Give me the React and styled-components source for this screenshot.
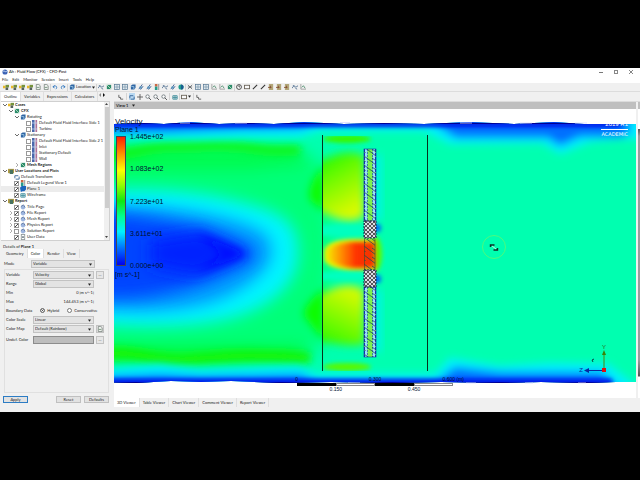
import React, {useState} from 'react';
import styled, {createGlobalStyle, css} from 'styled-components'


const GlobalStyle = createGlobalStyle`
  * {
    box-sizing: border-box;
  }

  body {
    margin: 0;
    background: #000;
  }

  button, input, select {
    margin: 0;
    padding: 0;
    font: inherit;
    color: inherit;
  }
`

const Page = styled.div`
  height: 100vh;
  padding: 68px 0;
  background: #000;
  font: 4px/6px Lato, "Open Sans", sans-serif;
  color: #222;
`

const Window = styled.div`
  display: flex;
  flex-direction: column;
  height: 100%;
  background: #f0f0f0;
  overflow: hidden;
`

const TitleBar = styled.header`
  display: flex;
  align-items: center;
  gap: 1px;
  height: 8px;
  padding: 0 6px 0 2px;
  background: #fff;
  color: #000;
`

const WindowButtons = styled.div`
  display: flex;
  gap: 10px;
  margin-left: auto;
`

const WindowButton = styled.button`
  display: flex;
  width: 5px;
  height: 5px;
  border: 0;
  background: none;
`

const MenuBar = styled.nav`
  display: flex;
  gap: 4px;
  height: 7px;
  padding-left: 2px;
  background: #fff;
`

const MenuItem = styled.button`
  border: 0;
  background: none;
`

const Toolbar = styled.div`
  display: flex;
  align-items: center;
  gap: 2px;
  height: ${({$small}) => $small ? '10px' : '9px'};
  padding-left: ${({$small}) => $small ? '4px' : '3px'};
  border-bottom: 1px solid #dcdcdc;
`

const ToolButton = styled.button`
  display: flex;
  align-items: center;
  gap: 1px;
  height: 7px;
  border: 0;
  background: ${({$active}) => $active ? '#b9d9f2' : 'none'};
`

const Separator = styled.span`
  width: 1px;
  height: 7px;
  margin: 0 ${({$tight}) => $tight ? '-1px' : '0'};
  background: #d4d4d4;
`

const Body = styled.div`
  display: flex;
  flex: 1;
  min-height: 0;
`

const SidePanel = styled.aside`
  display: flex;
  flex-direction: column;
  width: 114px;
  padding: 0 4px 0 1px;
`

const Tabs = styled.div`
  display: flex;
  align-items: stretch;
  height: 9px;
  margin-left: ${({$inset}) => $inset ? '2px' : '0'};
`

const Tab = styled.button`
  padding: 0 3px;
  border: 0;
  border-right: 1px solid #dedede;
  background: ${({$active}) => $active ? '#fff' : '#f0f0f0'};
  white-space: nowrap;
`

const TreeBox = styled.div`
  display: flex;
  height: 140px;
  border: 1px solid #d0d0d0;
  border-left: 0;
  background: #fff;
`

const TreeRows = styled.div`
  flex: 1;
  min-width: 0;
  overflow: hidden;
`

const TreeRow = styled.div`
  display: flex;
  align-items: center;
  height: 6px;
  padding-left: ${({$level}) => $level * 6}px;
  background: ${({$selected}) => $selected ? '#ececec' : 'none'};
  font-weight: ${({$bold}) => $bold ? 700 : 400};
  white-space: nowrap;
`

const ChevronCell = styled.span`
  display: flex;
  flex-shrink: 0;
  justify-content: center;
  width: 7px;
`

const TreeLabel = styled.label`
  display: flex;
  flex-shrink: 0;
  align-items: center;
  gap: 1px;
`

const Check = styled.input`
  appearance: none;
  flex-shrink: 0;
  width: 5px;
  height: 5px;
  border: 1px solid #999;
  background: #fff;

  &:checked {
    background: linear-gradient(135deg, #fff 40%, #444 40% 65%, #fff 65%);
  }
`

const ScrollBar = styled.div`
  display: flex;
  flex-direction: column;
  justify-content: space-between;
  align-items: center;
  width: 5px;
  padding: 1px 0;
  background: #f0f0f0;
`

const ScrollThumb = styled.span`
  flex: 1;
  width: 4px;
  margin: 1px 0 28px;
  background: #cdcdcd;
`

const DetailsTitle = styled.div`
  height: 8px;
  padding: 3px 0 0 2px;
`

const Field = styled.div`
  display: grid;
  grid-template-columns: 25px 1fr 8px;
  align-items: center;
  gap: 0 2px;
  height: ${({$tall}) => $tall ? '13px' : '9px'};
`

const DetailsPage = styled.div`
  display: flex;
  flex-direction: column;
  flex: 1;
  padding: 1px 1px 0 3px;

  > ${Field} {
    padding-right: 4px;
  }
`

const Group = styled.div`
  display: flex;
  flex-direction: column;
  flex: 1;
  margin-top: 1px;
  border: 1px solid #e0e0e0;
  padding: 0 4px 0 1px;
`

const SelectBox = styled.div`
  position: relative;
  display: flex;
  height: 8px;

  svg {
    position: absolute;
    top: 3px;
    right: 3px;
    pointer-events: none;
  }
`

const Select = styled.select`
  appearance: none;
  width: 100%;
  padding-left: 1px;
  border: 1px solid ${({$swatch}) => $swatch ? '#8c8c8c' : '#c2c2c2'};
  border-radius: 0;
  background: ${({$swatch}) => $swatch ? '#bdbdbd' : '#e3e3e3'};
`

const MoreButton = styled.button`
  display: flex;
  align-items: center;
  justify-content: center;
  height: 8px;
  border: 1px solid #c2c2c2;
  background: #e6e6e6;
  line-height: 4px;
`

const Value = styled.output`
  text-align: right;
`

const RadioRow = styled.div`
  display: flex;
  align-items: center;
  height: 9px;
`

const RadioLabel = styled.label`
  display: flex;
  align-items: center;
  gap: 2px;
  margin-left: 8px;
`

const Radio = styled.input`
  appearance: none;
  width: 5px;
  height: 5px;
  border: 1px solid #777;
  border-radius: 50%;
  background: #fff;

  &:checked {
    background: #222;
    box-shadow: inset 0 0 0 1px #fff;
  }
`

const Actions = styled.div`
  display: flex;
  gap: 3px;
  padding: 3px 1px 9px 2px;
`

const ActionButton = styled.button`
  width: 25px;
  height: 7px;
  border: 1px solid ${({$primary}) => $primary ? '#2c7cc4' : '#c0c0c0'};
  background: #e2e2e2;
  line-height: 4px;

  &:first-child {
    margin-right: auto;
  }
`

const Main = styled.main`
  display: flex;
  flex-direction: column;
  flex: 1;
  min-width: 0;
`

const Stage = styled.div`
  display: grid;
  grid-template-columns: 1fr 2px;
  gap: 2px;
  flex: 1;
  min-height: 0;
`

const View = styled.section`
  display: flex;
  flex-direction: column;
  min-height: 0;
`

const ViewHeader = styled.div`
  display: flex;
  align-items: center;
  gap: 4px;
  height: 7px;
  padding-left: 2px;
  background: #bfbfbf;
`

const Viewport = styled.div`
  position: relative;
  flex: 1;
  min-height: 0;
  background: #fff;
  overflow: hidden;
  font-family: "Liberation Sans", Arial, sans-serif;
  color: #001030;
`

const FieldDrawing = styled.svg`
  position: absolute;
  inset: 0;
  width: 100%;
  height: 100%;
`

const Legend = styled.div`
  position: absolute;
  top: 9px;
  left: 1px;
  font-size: 7px;
  line-height: 7px;
`

const LegendTitle = styled.div`
  font-size: 8px;
  line-height: 8px;
`

const LegendScale = styled.div`
  display: flex;
  gap: 4px;
  height: 136px;
  margin-bottom: 2px;
  padding-left: 1px;
`

const ColorBar = styled.div`
  width: 10px;
  height: 130px;
  margin-top: 3px;
  border: 1px solid #445;
  background: linear-gradient(#ff2000, #ff8800 12%, #ffff00 26%, #8cff00 38%, #10e810 50%, #00ff90 62%, #00f0ff 74%, #0070ff 87%, #0000ee);
`

const LegendValues = styled.div`
  display: flex;
  flex-direction: column;
  justify-content: space-between;
`

const Watermark = styled.div`
  position: absolute;
  top: 12px;
  right: 8px;
  color: #fff;
  font: 5px/7px "DejaVu Sans", sans-serif;
  text-align: right;
`

const Release = styled.div`
  border-bottom: 1px solid #fff;
  font: 6px/7px "Liberation Sans", sans-serif;
  padding-bottom: 1px;
  margin-bottom: 1px;
`

const Sliver = styled.div`
  background: linear-gradient(#bfbfbf 7px, #fff 7px 27px, #555 27px, #9c9c9c 34px calc(100% - 38px), #555 calc(100% - 22px), #fff calc(100% - 21px));
`

const Footer = styled.footer`
  height: 14px;
`

const iconShapes = {
  case: <><rect x="0" y="2" width="3" height="3" fill="#e8b92c"/><rect x="3" y="1" width="4" height="3" fill="#75933c"/><rect x="3" y="4" width="3" height="3" fill="#54615d"/></>,
  file: <><path d="M1.500 .5h3l1.500 1.500v4.500h-4.500z" fill="#eef2ee" stroke="#66736b" strokeWidth=".8"/><path d="M2 4h3" stroke="#729277"/></>,
  undo: <path d="M1 3.500l2-2M1 3.500l2 1M1.500 3c4-2 5 1 3 3" fill="none" stroke="#2a73bd"/>,
  redo: <path d="M6 3.500l-2-2M6 3.500l-2 1M5.500 3c-4-2-5 1-3 3" fill="none" stroke="#2a73bd"/>,
  cube: <><path d="M1 2l2-1.500h3.500v4L5 6.500H1z" fill="#2f66a4"/><path d="M1.500 3h3v3" fill="none" stroke="#a2c9e5"/></>,
  globe: <><circle cx="3.500" cy="3.500" r="3" fill="#3c63b5"/><path d="M1 3c2-2 3 2 5-1" fill="none" stroke="#dfefff"/></>,
  lines: <path d="M0 5c2-5 3 1 7-3M1 2h2M4 5l2 1" fill="none" stroke="#496b8f"/>,
  grid: <><rect x=".5" y=".5" width="6" height="6" fill="#dfe9ef" stroke="#547692" strokeWidth=".8"/><path d="M0 3.500h7M3.500 0v7" stroke="#7897ab" strokeWidth=".8"/></>,
  slice: <><path d="M1 6L5 .5M3 6.500l3-4" stroke="#31558d"/><circle cx="3" cy="4" r="1.500" fill="#5a96be"/></>,
  teal: <><circle cx="3.500" cy="3.500" r="3" fill="#1f9d90"/><path d="M3.500.5v6a3 3 0 0 0 0-6" fill="#195d8e"/></>,
  cross: <path d="M1 1l5 5M6 1L1 6M1 3.500h5" stroke="#4d5358" strokeWidth=".8"/>,
  chart: <><path d="M1 0v6h6" fill="none" stroke="#888" strokeWidth=".8"/><path d="M2 4l2-2 2 3" fill="none" stroke="#4b8c6c"/></>,
  leaf: <><rect x="1" y="1" width="5" height="5" fill="#2c8b6a"/><path d="M1 1l5 5" stroke="#bce3c7"/></>,
  clock: <><circle cx="3.500" cy="3.500" r="2.800" fill="#fff" stroke="#333"/><path d="M3.500 1.500v2h1" stroke="#333" fill="none"/></>,
  box: <rect x=".5" y="1.500" width="6" height="4" fill="#f9f9f9" stroke="#676055"/>,
  pen: <path d="M1 6l5-5" stroke="#333" strokeWidth="1.200"/>,
  export: <><rect x="1" y="0" width="5" height="7" fill="#b3a779"/><path d="M0 4h4M3 2v3" stroke="#854f33"/></>,
  zoom: <><circle cx="3" cy="3" r="2" fill="#fff" stroke="#6b7479"/><path d="M4.500 4.500L7 7" stroke="#444"/></>,
  move: <path d="M3.500 0v7M0 3.500h7" stroke="#555"/>,
  rotate: <path d="M1 5V2h4M6 3v3H2" fill="none" stroke="#2e5f93"/>,
  pick: <path d="M1 1v3h2v2h3" fill="none" stroke="#555"/>,
  mesh: <><rect x="0" y="0" width="3" height="7" fill="#4a68ac"/><rect x="4" y="0" width="2" height="7" fill="#b0749a"/><path d="M0 3.500h6" stroke="#bfcdea"/></>,
  legend: <><rect x="1" y="0" width="3" height="3" fill="#cc6842"/><rect x="1" y="3" width="3" height="4" fill="#259b8c"/><path d="M5.500 0v7" stroke="#888"/></>,
  plane: <path d="M0 2l2-2h5v4L5 6H3L1 7z" fill="#1d66bd"/>,
  wire: <path d="M1 2h5v4H1zM1 4h5M3.500 2v4" fill="none" stroke="#398b99"/>,
  report: <><circle cx="3.500" cy="4" r="2.500" fill="#9cb4de"/><path d="M1 3l3-2 2 3" fill="none" stroke="#56739f"/></>,
  user: <><rect x="1.500" y=".5" width="4" height="6" fill="#fff" stroke="#8e9899"/><circle cx="3.500" cy="3.500" r="1" fill="#345"/></>,
  folder: <><rect x="0" y="1" width="7" height="5" fill="#b49d45"/><rect x="2" y="2" width="4" height="5" fill="#477260"/></>,
}

const Glyph = styled.svg`
  flex-shrink: 0;
  width: 6px;
  height: 6px;
`

const Icon = ({name}) => (
    <Glyph viewBox="0 0 7 7" aria-hidden="true">{iconShapes[name]}</Glyph>
)

const Caret = ({fill = '#222'}) => (
    <svg width="3" height="3" viewBox="0 0 4 3" aria-hidden="true"><path d="M0 0h4L2 3z" fill={fill}/></svg>
)

const Chevron = ({open}) => (
    <svg width="4" height="4" viewBox="0 0 4 4" aria-hidden="true">
        <path d={open ? 'M0 1l2 2 2-2' : 'M1 0l2 2-2 2'} fill="none" stroke={open ? '#444' : '#999'} strokeWidth="0.8"/>
    </svg>
)

const mainTools = [
    ['case', 'case', 'case', 'case', 'file', 'file'],
    ['undo', 'redo'],
    ['location'],
    ['lines', 'leaf', 'grid', 'grid', 'cube', 'slice', 'slice', 'legend', 'lines', 'slice', 'teal'],
    ['cross', 'grid', 'grid', 'chart', 'chart', 'leaf'],
    ['clock', 'box', 'pen', 'pen', 'export', 'export', 'export', 'lines', 'chart'],
]

const treeItems = [
    {text: 'Cases', level: 0, icon: 'case', open: true, bold: true},
    {text: 'CFX', level: 1, icon: 'leaf', open: true, bold: true},
    {text: 'Rotating', level: 2, icon: 'cube', open: true},
    {text: 'Default Fluid Fluid Interface Side 1', level: 3, icon: 'mesh', checked: false},
    {text: 'Turbine', level: 3, icon: 'mesh', checked: false},
    {text: 'Stationary', level: 2, icon: 'cube', open: true},
    {text: 'Default Fluid Fluid Interface Side 2 1', level: 3, icon: 'mesh', checked: false},
    {text: 'Inlet', level: 3, icon: 'mesh', checked: false},
    {text: 'Stationary Default', level: 3, icon: 'mesh', checked: false},
    {text: 'Wall', level: 3, icon: 'mesh', checked: false},
    {text: 'Mesh Regions', level: 2, icon: 'leaf', open: false, bold: true},
    {text: 'User Locations and Plots', level: 0, icon: 'folder', open: true, bold: true},
    {text: 'Default Transform', level: 1, icon: 'rotate'},
    {text: 'Default Legend View 1', level: 1, icon: 'legend', checked: true},
    {text: 'Plane 1', level: 1, icon: 'plane', checked: true, selected: true},
    {text: 'Wireframe', level: 1, icon: 'wire', checked: true},
    {text: 'Report', level: 0, icon: 'folder', open: true, bold: true},
    {text: 'Title Page', level: 1, icon: 'report', checked: true},
    {text: 'File Report', level: 1, icon: 'report', checked: true, open: false},
    {text: 'Mesh Report', level: 1, icon: 'report', checked: true, open: false},
    {text: 'Physics Report', level: 1, icon: 'report', checked: true, open: false},
    {text: 'Solution Report', level: 1, icon: 'report', checked: false, open: false},
    {text: 'User Data', level: 1, icon: 'user', checked: true},
    {text: 'Display Properties and Defaults', level: 0, icon: 'folder', open: true, bold: true},
]

const TreeItem = ({item}) => {
    const [checked, setChecked] = useState(item.checked)

    return (
        <TreeRow $level={item.level} $bold={item.bold} $selected={item.selected}>
            <ChevronCell>{item.open !== undefined && <Chevron open={item.open}/>}</ChevronCell>
            <TreeLabel>
                {item.checked !== undefined &&
                    <Check type={'checkbox'} checked={checked} onChange={(e) => setChecked(e.target.checked)}/>
                }
                <Icon name={item.icon}/>
                {item.text}
            </TreeLabel>
        </TreeRow>
    )
}

const SelectField = ({label, id, option, more, tall, swatch}) => (
    <Field $tall={tall}>
        <label htmlFor={id}>{label}</label>
        <SelectBox>
            <Select id={id} $swatch={swatch}>
                <option>{option}</option>
            </Select>
            {!swatch && <Caret/>}
        </SelectBox>
        {more && <MoreButton aria-label={'More'}>{more}</MoreButton>}
    </Field>
)

// coordinates inside the drawing are those of the whole window, the viewBox shifts them
const FlowField = () => (
    <FieldDrawing viewBox="114 109 522 289" preserveAspectRatio="none" aria-hidden="true">
        <defs>
            <filter id="b2" x="-50%" y="-50%" width="200%" height="200%"><feGaussianBlur stdDeviation="2"/></filter>
            <filter id="b4" x="-50%" y="-50%" width="200%" height="200%"><feGaussianBlur stdDeviation="4"/></filter>
            <filter id="b8" x="-50%" y="-50%" width="200%" height="200%"><feGaussianBlur stdDeviation="8"/></filter>
            <clipPath id="domain">
                <path d="M114 124l30-1 20 1 25-2 30 2 30-1 25 1 30-2 40 2 40-1 40 1 45-2 45 2 40-2 30 2 52 0v258l-20 0-30 1-45-1-40 1-60-1-50 1-60-1-50 1-50-2-30 1-30-1-35 2-40-1z"/>
            </clipPath>
            <clipPath id="inner"><rect x="323" y="136" width="52" height="235"/></clipPath>
            <linearGradient id="jet" x1="0" x2="1">
                <stop offset="0" stopColor="#f8e000"/>
                <stop offset=".3" stopColor="#ff8800"/>
                <stop offset=".6" stopColor="#ff3000"/>
                <stop offset="1" stopColor="#f03800"/>
            </linearGradient>
            <linearGradient id="upperWash" x1="0" x2=".4" y1="0" y2="1">
                <stop offset="0" stopColor="#10f800"/>
                <stop offset=".5" stopColor="#78fa00"/>
                <stop offset="1" stopColor="#d8fa00"/>
            </linearGradient>
            <linearGradient id="lowerWash" x1="0" x2=".4" y1="1" y2="0">
                <stop offset="0" stopColor="#20f800"/>
                <stop offset=".5" stopColor="#78fa00"/>
                <stop offset="1" stopColor="#d0fa00"/>
            </linearGradient>
            <pattern id="hatch" width="12" height="9" patternUnits="userSpaceOnUse">
                <path d="M0 0l12 9M0 5l7 5" stroke="#1c4a58" strokeWidth=".8"/>
            </pattern>
            <pattern id="mesh" width="4" height="4" patternUnits="userSpaceOnUse">
                <rect width="4" height="4" fill="#dcdce4"/>
                <path d="M0 0l4 4M4 0L0 4" stroke="#333" strokeWidth=".8"/>
            </pattern>
        </defs>
        <g clipPath="url(#domain)">
            <rect x="114" y="120" width="522" height="265" fill="#00ffb0"/>

            <g filter="url(#b8)">
                <path d="M80 145H250L322 160 330 250 322 348 250 365H80z" fill="#00ff78"/>
                <path d="M80 148H300L310 164 250 170H80zM80 362H300L310 345 250 344H80z" fill="#00fc48"/>
            </g>
            <g filter="url(#b4)">
                <path d="M324 164Q306 186 310 200L324 212zM324 288Q302 306 304 316L324 342z" fill="#08fc00"/>
            </g>
            <g filter="url(#b4)" fill="none" stroke="#14f400">
                <path d="M100 154C135 156 140 147 170 147S220 144 250 148 275 150 300 150" strokeWidth="7"/>
                <path d="M100 354C140 350 150 362 190 359S250 354 310 358" strokeWidth="11"/>
            </g>
            <path d="M90 191C170 184 225 196 260 207S298 235 298 254 287 295 252 311 160 329 90 324z" fill="#00f4ff" filter="url(#b8)"/>
            <path d="M90 207C150 203 210 212 242 223S271 244 271 254 257 282 227 296 150 314 90 308z" fill="#0098ff" filter="url(#b8)"/>
            <path d="M90 213C130 212 190 224 217 234S254 250 254 254 230 271 205 281 140 303 90 297z" fill="#0044ff" filter="url(#b8)"/>
            <path d="M150 240L200 232 248 254 196 275 150 266z" fill="#0020ff" filter="url(#b8)"/>
            <path d="M195 232L248 254 196 273 222 254z" fill="#0008ff" filter="url(#b4)"/>

            <g filter="url(#b4)">
                <path d="M90 110H650V139H622L590 142 560 154 542 143 450 144 425 131H320L300 137H240L200 138 140 138 90 140z" fill="#00f0ff"/>
                <path d="M90 400H650L634 384 608 364 550 363 500 366 450 358 435 374H318L298 366 200 369 160 364 90 370z" fill="#00f0ff"/>
                <path d="M90 110H630V132L622 137H580L560 146 548 138 456 138 434 124H318L300 129 240 130 160 133 90 133z" fill="#0070ff"/>
                <path d="M90 400H632L602 372H500L455 367 435 382H318L300 374 200 376 160 374 90 377z" fill="#0070ff"/>
            </g>
            <g filter="url(#b2)" fill="none" stroke="#0008e8">
                <path d="M110 124H620" strokeWidth="5"/>
                <path d="M110 382H612" strokeWidth="6"/>
            </g>
            <path d="M114 123.500H630M114 382.500H615" stroke="#000092" strokeWidth="1"/>

            <g clipPath="url(#inner)">
                <path d="M316 164Q345 146 364 156V216Q350 228 316 209z" fill="url(#upperWash)" filter="url(#b4)"/>
                <path d="M316 298Q345 278 364 290V344Q350 348 316 340z" fill="url(#lowerWash)" filter="url(#b4)"/>
                <ellipse cx="347" cy="139" rx="24" ry="4" fill="#38f800" filter="url(#b2)"/>
                <ellipse cx="347" cy="367" rx="24" ry="4" fill="#58f800" filter="url(#b2)"/>
                <path d="M320 225h44v11h-44zM320 272h44v8h-44z" fill="#00ffc0" filter="url(#b2)"/>
            </g>
            <ellipse cx="376" cy="254" rx="6" ry="17" fill="#60f800" filter="url(#b2)"/>
            <path d="M324 250Q328 240 352 239H375V270H352Q328 269 324 260z" fill="#e4f400" filter="url(#b2)"/>
            <path d="M328 250Q334 243 352 242H375V268H352Q334 266 328 259z" fill="url(#jet)" filter="url(#b2)"/>
            <g fill="#00f2f0" filter="url(#b4)">
                <rect x="374" y="155" width="7" height="65"/>
                <rect x="374" y="290" width="7" height="62"/>
            </g>
            <ellipse cx="377" cy="228" rx="4" ry="4" fill="#0060ff" filter="url(#b2)"/>
            <ellipse cx="377" cy="279" rx="4" ry="4" fill="#0060ff" filter="url(#b2)"/>
        </g>

        {[[149, 72], [287, 70]].map(([y, h]) => (
            <g key={y}>
                <rect x="364" y={y} width="12" height={h} fill="#7cf050"/>
                <path d={`M366 ${y}v${h}M374 ${y}v${h}`} stroke="#9adcff" strokeWidth="2.500"/>
                <path d={`M364.500 ${y}v${h}M375.500 ${y}v${h}`} stroke="#1430c0" strokeDasharray="3 1"/>
                <path d={`M367.500 ${y}v${h}M372.500 ${y}v${h}`} stroke="#2250b0" strokeWidth=".7" strokeDasharray="2 1"/>
                <rect x="364" y={y} width="12" height={h} fill="url(#hatch)" stroke="#1430a0" strokeWidth=".6"/>
            </g>
        ))}
        <rect x="364" y="239" width="11" height="31" fill="url(#hatch)"/>
        <path d="M364.500 239v31M375 239v31" stroke="#5a4a20" strokeWidth=".7"/>
        <rect x="364" y="221" width="12" height="17" fill="url(#mesh)" stroke="#16204c" strokeDasharray="2 1"/>
        <rect x="364" y="270" width="12" height="17" fill="url(#mesh)" stroke="#16204c" strokeDasharray="2 1"/>
        <path d="M322.500 135v236M427.500 135v236" stroke="#06301c"/>
        <path d="M180 123h10M235 123h12M340 122.500h10M460 123h12M520 123h12M575 123h12M348 383h12M466 383h10M525 383h8M578 383h8" stroke="#d8dcff" strokeWidth=".8"/>

        <circle cx="494" cy="247" r="11.500" fill="none" stroke="#60f870" strokeWidth=".8"/>
        <path d="M490.500 247v-2l4 0M497.500 248v2l-4 0" fill="none" stroke="#102a24" strokeWidth="1.400"/>
        <path d="M492 246l4 3" stroke="#c8e8dc"/>

        <path d="M604 370V353" stroke="#4a8a10"/>
        <path d="M602 355l2-5 2 5z" fill="#3c8208"/>
        <path d="M604 370.500H588" stroke="#0828a0"/>
        <path d="M589 368l-5 2.500 5 2.500z" fill="#0828a0"/>
        <rect x="602" y="368" width="4" height="4" fill="#e01010"/>
        <path d="M594 359l-2 1 1 2" fill="none" stroke="#064a40"/>
    </FieldDrawing>
)

const AxisLabel = styled.span`
  position: absolute;
  right: ${({$right}) => $right}px;
  bottom: ${({$bottom}) => $bottom}px;
  color: ${({$color}) => $color};
  font-size: 6px;
  line-height: 6px;
`

const Ruler = styled.div`
  position: absolute;
  bottom: 6px;
  left: 35%;
  width: 30%;
  font-size: 5px;
  line-height: 5px;
`

const RulerMarks = styled.div`
  display: grid;
  grid-template-columns: repeat(4, 1fr) 0;
  height: 5px;
  white-space: nowrap;

  span {
    transform: translateX(-50%);
    justify-self: start;
  }

  ${({$lower}) => $lower && css`
    margin-top: 1px;
  `}
`

const RulerBar = styled.div`
  display: grid;
  grid-template-columns: repeat(4, 1fr);
  height: 3px;
  margin-top: 1px;

  i {
    border: 1px solid #888;
    background: #fff;
  }

  i:nth-child(odd) {
    border-color: #000;
    background: #000;
  }
`

const viewerTabs = ['3D Viewer', 'Table Viewer', 'Chart Viewer', 'Comment Viewer', 'Report Viewer']

const Details = () => {
    const [boundary, setBoundary] = useState('Hybrid')

    return (
        <>
            <DetailsTitle>Details of <b>Plane 1</b></DetailsTitle>
            <Tabs $inset>
                {['Geometry', 'Color', 'Render', 'View'].map((name) =>
                    <Tab key={name} $active={name === 'Color'}>{name}</Tab>
                )}
            </Tabs>
            <DetailsPage>
                <SelectField label={'Mode'} id={'mode'} option={'Variable'}/>
                <Group>
                    <SelectField label={'Variable'} id={'variable'} option={'Velocity'} more={'...'}/>
                    <SelectField label={'Range'} id={'range'} option={'Global'}/>
                    <Field><span>Min</span><Value>0 [m s^-1]</Value></Field>
                    <Field><span>Max</span><Value>144.453 [m s^-1]</Value></Field>
                    <RadioRow>
                        Boundary Data
                        {['Hybrid', 'Conservative'].map((name) => (
                            <RadioLabel key={name}>
                                <Radio type={'radio'} name={'boundary'} checked={boundary === name}
                                       onChange={() => setBoundary(name)}/>
                                {name}
                            </RadioLabel>
                        ))}
                    </RadioRow>
                    <SelectField label={'Color Scale'} id={'scale'} option={'Linear'}/>
                    <SelectField label={'Color Map'} id={'map'} option={'Default (Rainbow)'} more={<Icon name={'file'}/>}/>
                    <SelectField label={'Undef. Color'} id={'undef'} option={''} more={'...'} tall swatch/>
                </Group>
            </DetailsPage>
            <Actions>
                <ActionButton $primary>Apply</ActionButton>
                <ActionButton>Reset</ActionButton>
                <ActionButton>Defaults</ActionButton>
            </Actions>
        </>
    )
}

const App = () => {
    const [viewer, setViewer] = useState('3D Viewer')

    return (
        <Page>
            <GlobalStyle/>
            <Window>
                <TitleBar>
                    <Icon name={'globe'}/>
                    Ah : Fluid Flow (CFX) - CFD-Post
                    <WindowButtons>
                        <WindowButton aria-label={'Minimize'}>
                            <svg width="5" height="5"><path d="M0 2.500h4" stroke="#777"/></svg>
                        </WindowButton>
                        <WindowButton aria-label={'Maximize'}>
                            <svg width="5" height="5"><rect x=".5" y=".5" width="3" height="3" fill="none" stroke="#888"/></svg>
                        </WindowButton>
                        <WindowButton aria-label={'Close'}>
                            <svg width="5" height="5"><path d="M0 0l4 4M4 0L0 4" stroke="#666" strokeWidth=".8"/></svg>
                        </WindowButton>
                    </WindowButtons>
                </TitleBar>
                <MenuBar>
                    {['File', 'Edit', 'Monitor', 'Session', 'Insert', 'Tools', 'Help'].map((name) =>
                        <MenuItem key={name}>{name}</MenuItem>
                    )}
                </MenuBar>
                <Toolbar>
                    {mainTools.map((group, i) => (
                        <React.Fragment key={i}>
                            {i > 0 && <Separator $tight/>}
                            {group.map((name, n) => name === 'location'
                                ? <ToolButton key={n}><Icon name={'cube'}/>Location <Caret/></ToolButton>
                                : <ToolButton key={n} aria-label={name}><Icon name={name}/></ToolButton>
                            )}
                        </React.Fragment>
                    ))}
                </Toolbar>
                <Body>
                    <SidePanel>
                        <Tabs>
                            {['Outline', 'Variables', 'Expressions', 'Calculators'].map((name) =>
                                <Tab key={name} $active={name === 'Outline'}>{name}</Tab>
                            )}
                            <ToolButton aria-label={'Scroll tabs'}>
                                <svg width="8" height="5" viewBox="0 0 8 5"><path d="M3 0v4L1 2z" fill="#888"/><path d="M5 0v4l2-2z" fill="#111"/></svg>
                            </ToolButton>
                        </Tabs>
                        <TreeBox>
                            <TreeRows>
                                {treeItems.map((item) => <TreeItem key={item.text} item={item}/>)}
                            </TreeRows>
                            <ScrollBar>
                                <svg width="3" height="3"><path d="M0 2l1.500-2L3 2z" fill="#444"/></svg>
                                <ScrollThumb/>
                                <svg width="3" height="3"><path d="M0 0h3L1.500 2z" fill="#444"/></svg>
                            </ScrollBar>
                        </TreeBox>
                        <Details/>
                    </SidePanel>
                    <Main>
                        <Toolbar $small>
                            <ToolButton aria-label={'Select'}><Icon name={'pick'}/></ToolButton>
                            <Separator/>
                            <ToolButton $active aria-label={'Rotate'}><Icon name={'rotate'}/></ToolButton>
                            <ToolButton aria-label={'Pan'}><Icon name={'move'}/></ToolButton>
                            <ToolButton aria-label={'Zoom'}><Icon name={'zoom'}/></ToolButton>
                            <ToolButton aria-label={'Zoom box'}><Icon name={'zoom'}/></ToolButton>
                            <ToolButton aria-label={'Fit'}><Icon name={'zoom'}/></ToolButton>
                            <Separator/>
                            <ToolButton aria-label={'Highlight'}><Icon name={'wire'}/></ToolButton>
                            <Separator $tight/>
                            <ToolButton aria-label={'Layout'}><Icon name={'box'}/><Caret/></ToolButton>
                            <Separator/>
                            <ToolButton aria-label={'Probe'}><Icon name={'pick'}/></ToolButton>
                        </Toolbar>
                        <Stage>
                            <View>
                                <ViewHeader><b>View 1</b><Caret/></ViewHeader>
                                <Viewport>
                                    <FlowField/>
                                    <Legend>
                                        <LegendTitle>Velocity</LegendTitle>
                                        Plane 1
                                        <LegendScale>
                                            <ColorBar/>
                                            <LegendValues>
                                                <span>1.445e+02</span>
                                                <span>1.083e+02</span>
                                                <span>7.223e+01</span>
                                                <span>3.611e+01</span>
                                                <span>0.000e+00</span>
                                            </LegendValues>
                                        </LegendScale>
                                        [m s^-1]
                                    </Legend>
                                    <Watermark>
                                        <Release>2019 R1</Release>
                                        ACADEMIC
                                    </Watermark>
                                    <AxisLabel $right={30} $bottom={48} $color={'#2c6a10'}>Y</AxisLabel>
                                    <AxisLabel $right={53} $bottom={25} $color={'#0828a0'}>Z</AxisLabel>
                                    <Ruler>
                                        <RulerMarks>
                                            <span>0</span><i/><span>0.300</span><i/><span>0.600 (m)</span>
                                        </RulerMarks>
                                        <RulerBar><i/><i/><i/><i/></RulerBar>
                                        <RulerMarks $lower>
                                            <i/><span>0.150</span><i/><span>0.450</span>
                                        </RulerMarks>
                                    </Ruler>
                                </Viewport>
                            </View>
                            <Sliver/>
                        </Stage>
                        <Footer>
                            <Tabs>
                                {viewerTabs.map((name) =>
                                    <Tab key={name} $active={name === viewer} onClick={() => setViewer(name)}>{name}</Tab>
                                )}
                            </Tabs>
                        </Footer>
                    </Main>
                </Body>
            </Window>
        </Page>
    )
}

export default App;
